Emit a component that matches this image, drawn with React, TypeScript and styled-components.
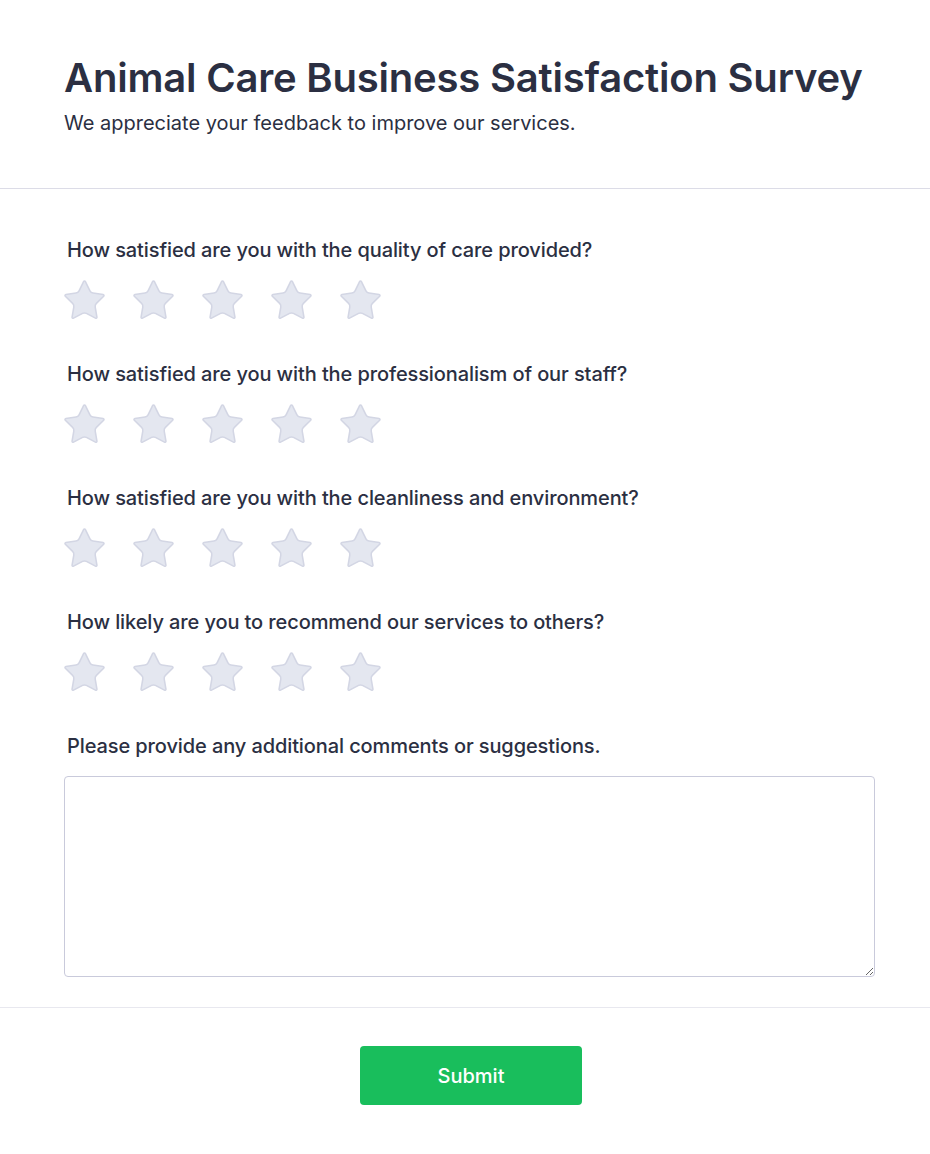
import styled, { createGlobalStyle } from "styled-components";

const GlobalStyle = createGlobalStyle`
  html, body {
    margin: 0;
    padding: 0;
    background: #ffffff;
  }
  body {
    font-family: Inter, "Noto Sans", "Liberation Sans", sans-serif;
    color: #2b2f42;
  }
  * {
    box-sizing: border-box;
  }
`;

const Page = styled.div`
  width: 930px;
  min-height: 1154px;
  background: #ffffff;
`;

const Header = styled.header`
  padding: 54px 55px 51px 64px;
  border-bottom: 1px solid #dcdce7;
`;

const Title = styled.h1`
  margin: 0;
  font-size: 40px;
  line-height: 48px;
  font-weight: 600;
  color: #2b2f42;
  letter-spacing: -0.2px;
`;

const Subtitle = styled.p`
  margin: 7px 0 0;
  font-size: 20px;
  line-height: 28px;
  font-weight: 400;
  color: #2b2f42;
`;

const Form = styled.form`
  display: flex;
  flex-direction: column;
`;

const Body = styled.div`
  padding: 47px 55px 30px 64px;
  display: flex;
  flex-direction: column;
  gap: 40px;
  border-bottom: 1px solid #e8e8ef;
`;

const Question = styled.div`
  display: flex;
  flex-direction: column;
  gap: 16px;
`;

const Label = styled.label`
  font-size: 20px;
  line-height: 28px;
  font-weight: 500;
  color: #2b2f42;
  padding-left: 3px;
  letter-spacing: -0.1px;
`;

const Stars = styled.div`
  display: flex;
  gap: 30px;
  height: 40px;
  align-items: center;
  padding-left: 1px;
`;

const StarButton = styled.button`
  border: 0;
  background: none;
  padding: 0;
  margin: 0;
  width: 39px;
  height: 38px;
  cursor: pointer;
  display: flex;
  svg {
    overflow: visible;
  }
`;

const Comments = styled.textarea`
  width: 100%;
  height: 201px;
  border: 1px solid #c9cadb;
  border-radius: 4px;
  resize: vertical;
  font-family: inherit;
  font-size: 16px;
  padding: 10px 12px;
  margin-top: 0;
  outline: none;
`;

const Footer = styled.div`
  display: flex;
  justify-content: center;
  padding: 38px 52px 0 64px;
`;

const SubmitButton = styled.button`
  width: 222px;
  height: 59px;
  border: 0;
  border-radius: 4px;
  background: #19be5c;
  color: #ffffff;
  font-family: inherit;
  font-size: 20px;
  font-weight: 500;
  cursor: pointer;
`;

const Star = () => (
  <svg width="39" height="38" viewBox="2 2 20 19.4">
    <path
      d="M11.525 2.295a.53.53 0 0 1 .95 0l2.31 4.679a2.123 2.123 0 0 0 1.595 1.16l5.166.756a.53.53 0 0 1 .294.904l-3.736 3.638a2.123 2.123 0 0 0-.611 1.878l.882 5.14a.53.53 0 0 1-.771.56l-4.618-2.428a2.122 2.122 0 0 0-1.973 0L6.396 21.01a.53.53 0 0 1-.77-.56l.881-5.139a2.122 2.122 0 0 0-.611-1.879L2.16 9.795a.53.53 0 0 1 .294-.906l5.165-.755a2.122 2.122 0 0 0 1.597-1.16z"
      fill="#e4e7f0"
      stroke="#d3d6e4"
      strokeWidth="0.8"
      strokeLinejoin="round"
    />
  </svg>
);

const questions = [
  "How satisfied are you with the quality of care provided?",
  "How satisfied are you with the professionalism of our staff?",
  "How satisfied are you with the cleanliness and environment?",
  "How likely are you to recommend our services to others?",
];

const App = () => {
  return (
    <>
      <GlobalStyle />
      <Page>
        <Header>
          <Title>Animal Care Business Satisfaction Survey</Title>
          <Subtitle>We appreciate your feedback to improve our services.</Subtitle>
        </Header>
        <Form onSubmit={(e) => e.preventDefault()}>
          <Body>
            {questions.map((q) => (
              <Question key={q}>
                <Label>{q}</Label>
                <Stars>
                  {[1, 2, 3, 4, 5].map((n) => (
                    <StarButton type="button" key={n} aria-label={`${n} stars`}>
                      <Star />
                    </StarButton>
                  ))}
                </Stars>
              </Question>
            ))}
            <Question>
              <Label htmlFor="comments">
                Please provide any additional comments or suggestions.
              </Label>
              <Comments id="comments" />
            </Question>
          </Body>
          <Footer>
            <SubmitButton type="submit">Submit</SubmitButton>
          </Footer>
        </Form>
      </Page>
    </>
  );
};

export default App;
